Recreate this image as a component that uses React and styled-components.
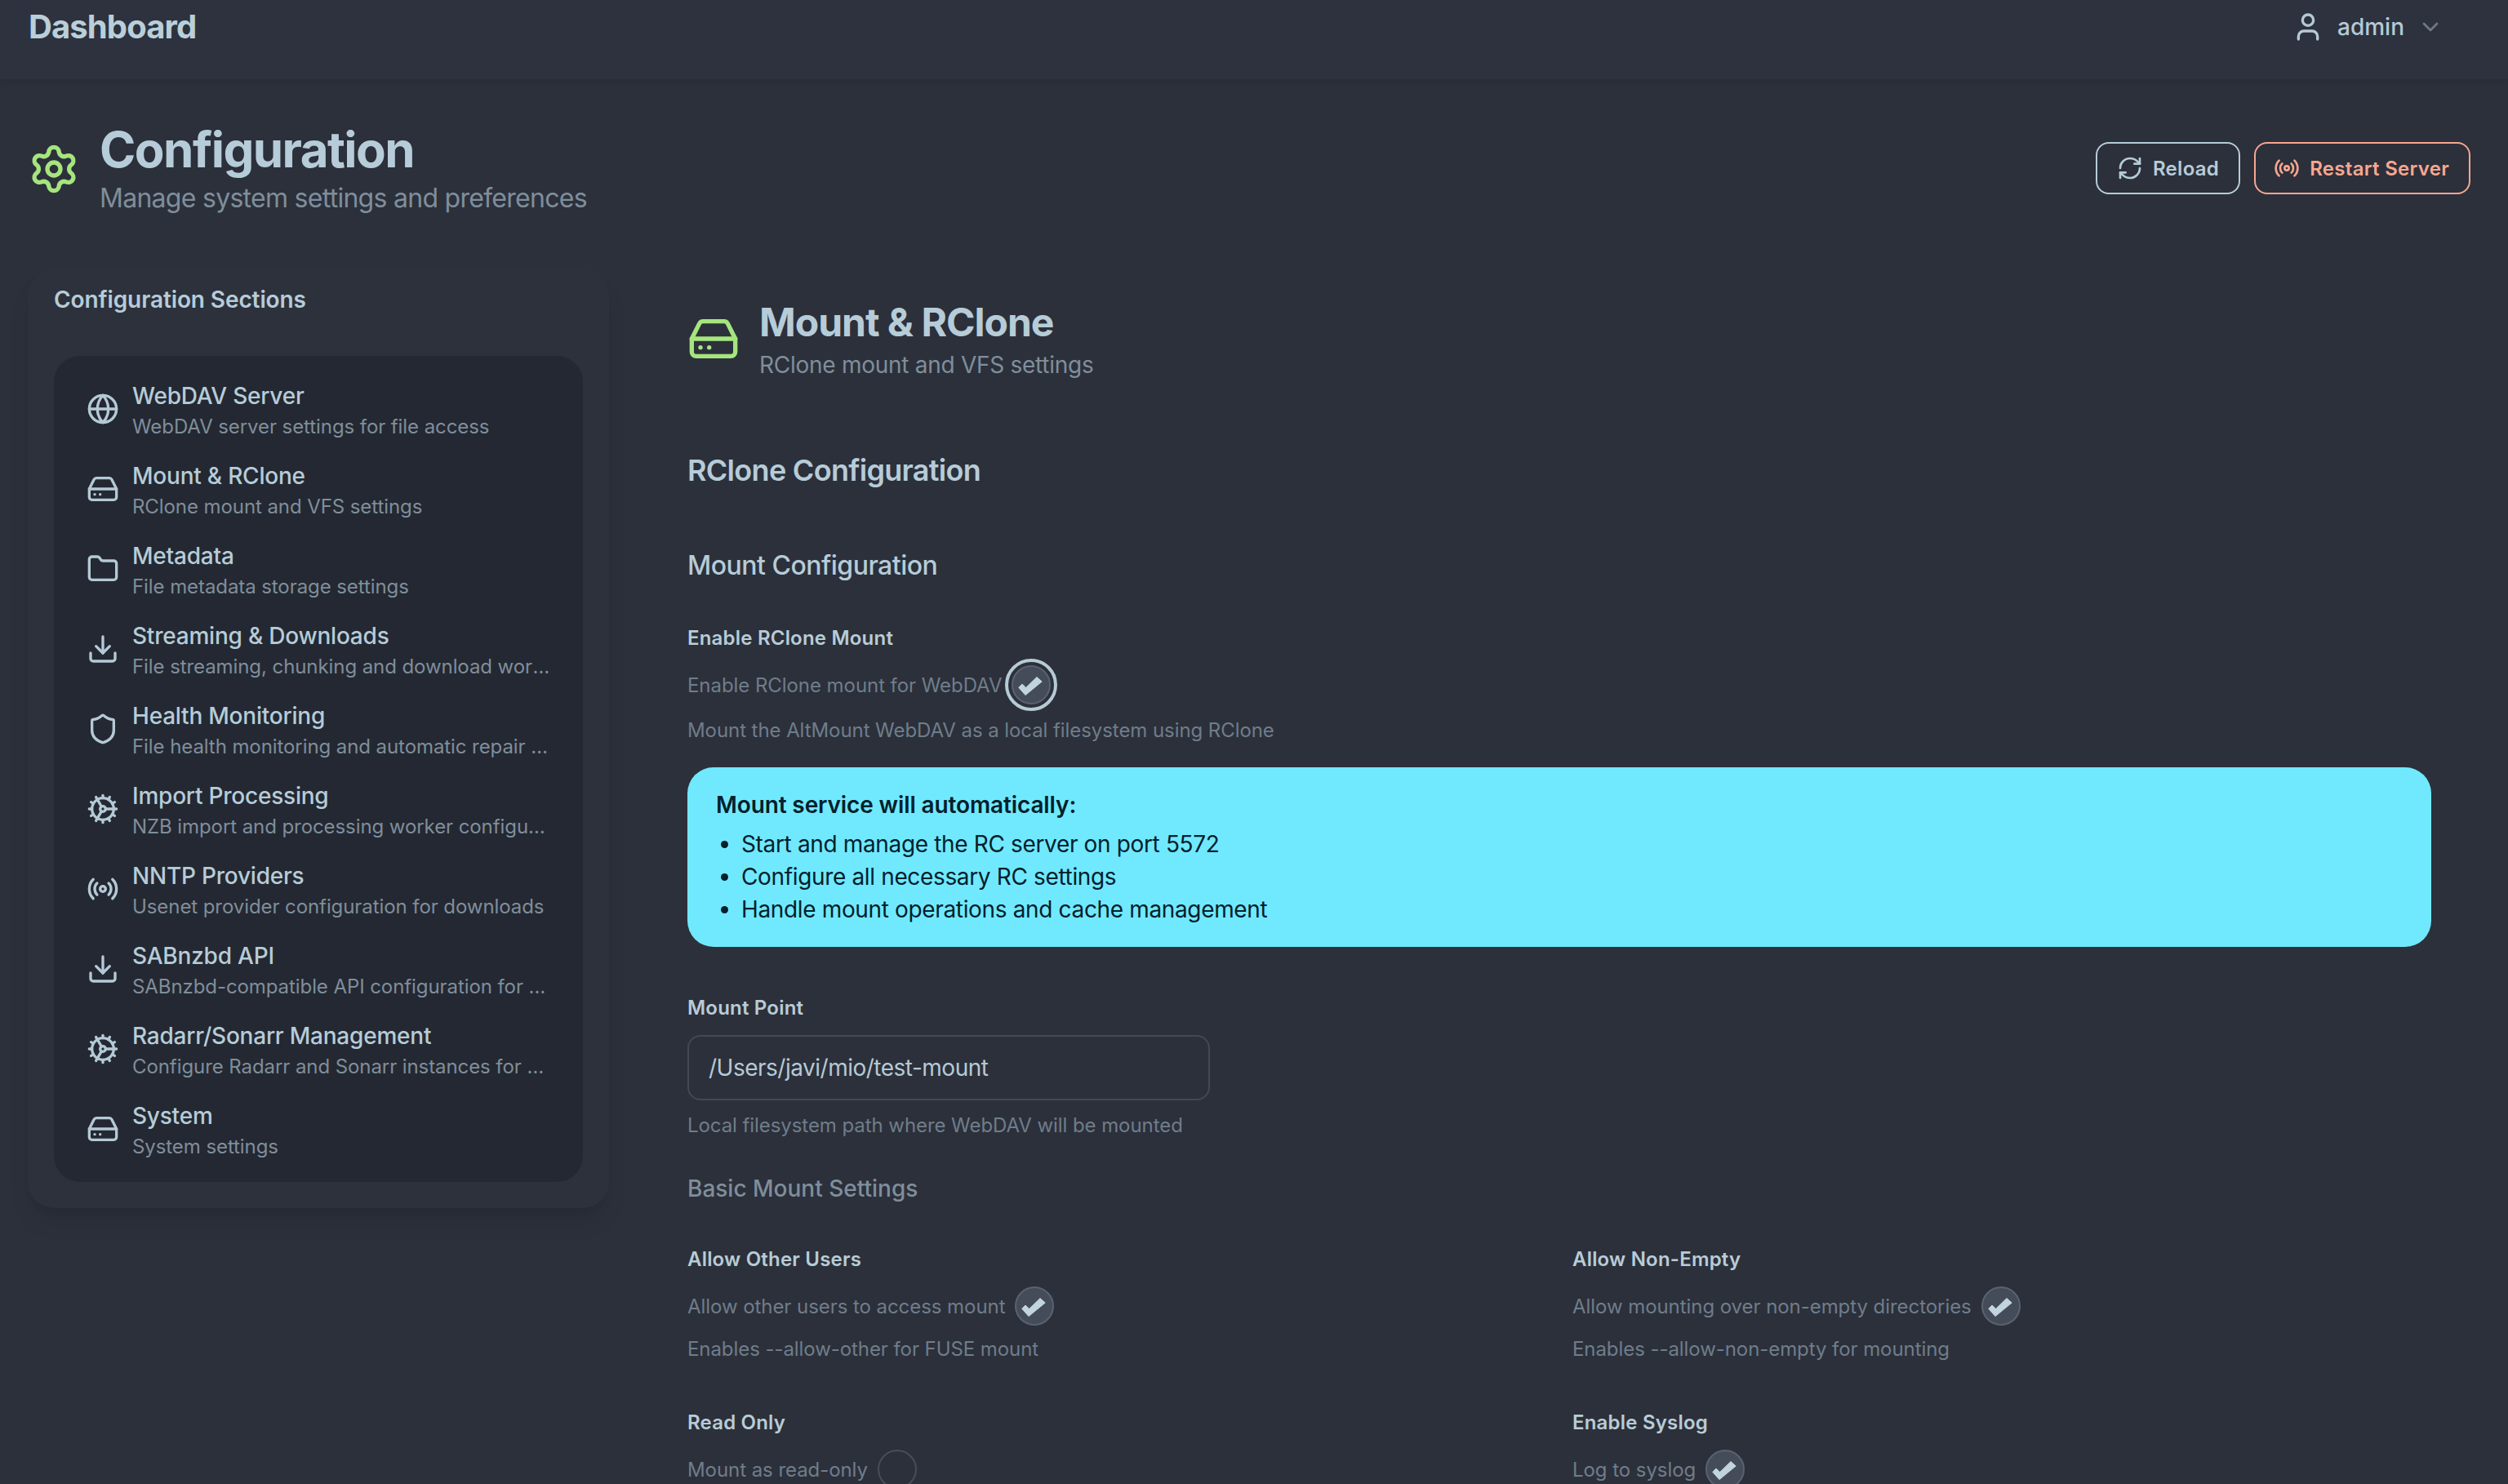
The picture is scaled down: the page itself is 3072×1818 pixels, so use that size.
import React from "react";
import styled, { createGlobalStyle } from "styled-components";
import { Settings, HardDrive, Globe, Folder, Download, Shield, Cog, Radio, User, ChevronDown, RefreshCw } from "lucide-react";

const Global = createGlobalStyle`
  html, body { margin: 0; padding: 0; height: 1818px; overflow: hidden; background: #2c303b; }
  body { font-family: Inter, "Noto Sans", sans-serif; color: #b4cad6; }
  * { box-sizing: border-box; }
`;

const Page = styled.div`
  height: 1818px;
  overflow: hidden;
  background: #2c303b;
`;
const Navbar = styled.header`
  height: 97px;
  display: flex;
  justify-content: space-between;
  align-items: flex-start;
  padding: 8px 79px 0 35px;
  background: #2e323e;
  box-shadow: 0 2px 8px rgba(0, 0, 0, 0.12);
`;
const Brand = styled.div`
  font-size: 40px;
  line-height: 50px;
  font-weight: 700;
  letter-spacing: -0.9px;
  color: #b9cfda;
`;
const UserMenu = styled.div`
  display: flex;
  align-items: center;
  gap: 16px;
  height: 50px;
  font-size: 28px;
  font-weight: 500;
  color: #b4cad6;
`;
const Caret = styled(ChevronDown)`
  color: #6d7a86;
`;
const PageHeader = styled.div`
  display: flex;
  justify-content: space-between;
  align-items: center;
  padding: 50px 46px 0 34px;
`;
const HeadLeft = styled.div`
  display: flex;
  align-items: center;
  gap: 24px;
`;
const GreenIcon = styled.span`
  display: flex;
  color: #a6e57e;
`;
const PageTitle = styled.h1`
  margin: 0;
  font-size: 60px;
  line-height: 72px;
  font-weight: 700;
  letter-spacing: -1.55px;
  color: #b6ccd8;
`;
const PageSub = styled.p`
  margin: 0;
  font-size: 32px;
  line-height: 48px;
  letter-spacing: -0.72px;
  color: #7f8e9b;
`;
const Actions = styled.div`
  display: flex;
  gap: 17px;
  margin-bottom: 2px;
`;
const Button = styled.button`
  height: 64px;
  display: flex;
  align-items: center;
  gap: 12px;
  padding: 0 24px 0 ${(p) => p.$left}px;
  font-family: inherit;
  font-size: 24px;
  font-weight: 600;
  letter-spacing: 0.3px;
  border-radius: 16px;
  background: transparent;
  color: ${(p) => p.$color};
  border: 2px solid ${(p) => p.$color};
`;
const Columns = styled.div`
  display: flex;
  align-items: flex-start;
  padding: 63px 94px 0 34px;
`;
const Sidebar = styled.aside`
  width: 712px;
  flex: none;
  padding: 17px 32px 32px 32px;
  border-radius: 32px;
  background: #2d313c;
  box-shadow: 0 20px 30px -6px rgba(0, 0, 0, 0.1), 0 8px 12px -8px rgba(0, 0, 0, 0.1);
`;
const SideTitle = styled.h3`
  margin: 0 0 49px;
  font-size: 28px;
  line-height: 40px;
  font-weight: 600;
  letter-spacing: -0.1px;
  color: #b6ccd8;
`;
const Menu = styled.nav`
  display: flex;
  flex-direction: column;
  padding: 16px;
  border-radius: 32px;
  background: #242832;
`;
const MenuItem = styled.div`
  height: 98px;
  display: flex;
  align-items: center;
  gap: 16px;
  padding: 0 24px;
  color: #b4cad6;
`;
const MenuText = styled.div`
  min-width: 0;
  flex: 1;
  margin-top: 2px;
`;
const MenuTitle = styled.div`
  font-size: 28px;
  line-height: 40px;
  font-weight: 500;
  letter-spacing: -0.22px;
  color: #b6ccd8;
`;
const MenuDesc = styled.div`
  padding-top: 2px;
  font-size: 24px;
  line-height: 32px;
  letter-spacing: -0.08px;
  color: #7f8e9b;
  white-space: nowrap;
  overflow: hidden;
  text-overflow: ellipsis;
`;
const Main = styled.main`
  flex: 1;
  margin-left: 96px;
  padding-top: 33px;
`;
const MainHead = styled.div`
  display: flex;
  align-items: center;
  gap: 24px;
`;
const MainTitle = styled.h2`
  margin: 0;
  font-size: 48px;
  line-height: 64px;
  font-weight: 700;
  letter-spacing: -1px;
  color: #b6ccd8;
`;
const MainSub = styled.p`
  margin: 0;
  font-size: 28px;
  line-height: 40px;
  letter-spacing: -0.27px;
  color: #7f8e9b;
`;
const SectionTitle = styled.h3`
  margin: 81px 0 0;
  font-size: 36px;
  line-height: 56px;
  font-weight: 600;
  letter-spacing: -0.7px;
  color: #b6ccd8;
`;
const SubTitle = styled.h4`
  margin: 61px 0 0;
  font-size: 32px;
  line-height: 56px;
  font-weight: 500;
  letter-spacing: -0.5px;
  color: #b6ccd8;
`;
const Label = styled.div`
  font-size: 24px;
  line-height: 32px;
  font-weight: 600;
  letter-spacing: 0.2px;
  color: #b8ccd6;
`;
const ToggleRow = styled.div`
  display: flex;
  align-items: center;
  gap: 12px;
  margin-top: 17px;
  font-size: 24px;
  letter-spacing: -0.06px;
  color: #6f7d8a;
`;
const Note = styled.div`
  margin-top: ${(p) => p.$top || 13}px;
  font-size: 24px;
  line-height: 32px;
  letter-spacing: -0.07px;
  color: #6f7d8a;
`;
const Box = styled.span`
  width: 48px;
  height: 48px;
  flex: none;
  display: flex;
  border-radius: 50%;
  background: ${(p) => (p.$on ? "#454c59" : "transparent")};
  border: 2px solid ${(p) => (p.$on ? "#5a6270" : "#474d59")};
  outline: ${(p) => (p.$focus ? "4px solid #b6cad4" : "none")};
  outline-offset: 4px;
  color: #c2d5de;
`;
const Alert = styled.div`
  margin-top: 29px;
  height: 220px;
  padding: 26px 35px 0;
  border-radius: 32px;
  background: #70e9ff;
  color: #04202b;
  font-size: 28px;
  line-height: 40px;
`;
const AlertTitle = styled.div`
  font-weight: 600;
  letter-spacing: -0.12px;
`;
const AlertList = styled.ul`
  margin: 8px 0 0;
  padding: 0 0 0 31px;
  letter-spacing: -0.35px;
`;
const FieldLabel = styled(Label)`
  margin-top: ${(p) => p.$top}px;
`;
const Input = styled.input`
  display: block;
  width: 640px;
  height: 80px;
  margin-top: 17px;
  padding: 0 24px;
  border: 2px solid #434855;
  border-radius: 16px;
  background: transparent;
  font-family: inherit;
  font-size: 28px;
  letter-spacing: -0.5px;
  color: #b4cad6;
`;
const GroupTitle = styled.h5`
  margin: 41px 0 0;
  font-size: 28px;
  line-height: 40px;
  font-weight: 500;
  color: #7f8e9b;
`;
const Grid = styled.div`
  display: grid;
  grid-template-columns: 1fr 1fr;
  column-gap: 32px;
  row-gap: 58px;
  margin-top: 51px;
`;

const Check = ({ on, focus }) => (
  <Box $on={on} $focus={focus}>
    {on && (
      <svg width="44" height="44" viewBox="0 0 44 44">
        <polygon
          points="6.8,25.3 11,21 15.7,25.4 29,12.5 35.2,18 15,34.6"
          fill="currentColor"
          stroke="currentColor"
          strokeWidth="1"
          strokeLinejoin="round"
        />
      </svg>
    )}
  </Box>
);

const items = [
  [Globe, "WebDAV Server", "WebDAV server settings for file access"],
  [HardDrive, "Mount & RClone", "RClone mount and VFS settings"],
  [Folder, "Metadata", "File metadata storage settings"],
  [Download, "Streaming & Downloads", "File streaming, chunking and download workers"],
  [Shield, "Health Monitoring", "File health monitoring and automatic repair settings"],
  [Cog, "Import Processing", "NZB import and processing worker configuration"],
  [Radio, "NNTP Providers", "Usenet provider configuration for downloads"],
  [Download, "SABnzbd API", "SABnzbd-compatible API configuration for clients"],
  [Cog, "Radarr/Sonarr Management", "Configure Radarr and Sonarr instances for repair"],
  [HardDrive, "System", "System settings"],
];

const fields = [
  ["Allow Other Users", "Allow other users to access mount", true, "Enables --allow-other for FUSE mount"],
  ["Allow Non-Empty", "Allow mounting over non-empty directories", true, "Enables --allow-non-empty for mounting"],
  ["Read Only", "Mount as read-only", false, "Mount the filesystem as read-only"],
  ["Enable Syslog", "Log to syslog", true, "Send mount logs to syslog"],
];

export default function App() {
  return (
    <Page>
      <Global />
      <Navbar>
        <Brand>Dashboard</Brand>
        <UserMenu>
          <User size={40} strokeWidth={2} />
          <span>admin</span>
          <Caret size={32} />
        </UserMenu>
      </Navbar>
      <PageHeader>
        <HeadLeft>
          <GreenIcon><Settings size={64} /></GreenIcon>
          <div>
            <PageTitle>Configuration</PageTitle>
            <PageSub>Manage system settings and preferences</PageSub>
          </div>
        </HeadLeft>
        <Actions>
          <Button $color="#b6ccd8" $left={24}><RefreshCw size={32} />Reload</Button>
          <Button $color="#f8a78f" $left={22}><Radio size={32} />Restart Server</Button>
        </Actions>
      </PageHeader>
      <Columns>
        <Sidebar>
          <SideTitle>Configuration Sections</SideTitle>
          <Menu>
            {items.map(([Icon, title, desc]) => (
              <MenuItem key={title}>
                <Icon size={40} style={{ flex: "none" }} />
                <MenuText>
                  <MenuTitle>{title}</MenuTitle>
                  <MenuDesc>{desc}</MenuDesc>
                </MenuText>
              </MenuItem>
            ))}
          </Menu>
        </Sidebar>
        <Main>
          <MainHead>
            <GreenIcon><HardDrive size={64} /></GreenIcon>
            <div>
              <MainTitle>Mount &amp; RClone</MainTitle>
              <MainSub>RClone mount and VFS settings</MainSub>
            </div>
          </MainHead>
          <SectionTitle>RClone Configuration</SectionTitle>
          <SubTitle>Mount Configuration</SubTitle>
          <FieldLabel $top={45}>Enable RClone Mount</FieldLabel>
          <ToggleRow>
            <span>Enable RClone mount for WebDAV</span>
            <Check on focus />
          </ToggleRow>
          <Note $top={16}>Mount the AltMount WebDAV as a local filesystem using RClone</Note>
          <Alert>
            <AlertTitle>Mount service will automatically:</AlertTitle>
            <AlertList>
              <li>Start and manage the RC server on port 5572</li>
              <li>Configure all necessary RC settings</li>
              <li>Handle mount operations and cache management</li>
            </AlertList>
          </Alert>
          <FieldLabel $top={59}>Mount Point</FieldLabel>
          <Input readOnly value="/Users/javi/mio/test-mount" />
          <Note $top={15}>Local filesystem path where WebDAV will be mounted</Note>
          <GroupTitle>Basic Mount Settings</GroupTitle>
          <Grid>
            {fields.map(([label, text, on, note]) => (
              <div key={label}>
                <Label>{label}</Label>
                <ToggleRow>
                  <span>{text}</span>
                  <Check on={on} />
                </ToggleRow>
                <Note>{note}</Note>
              </div>
            ))}
          </Grid>
        </Main>
      </Columns>
    </Page>
  );
}
